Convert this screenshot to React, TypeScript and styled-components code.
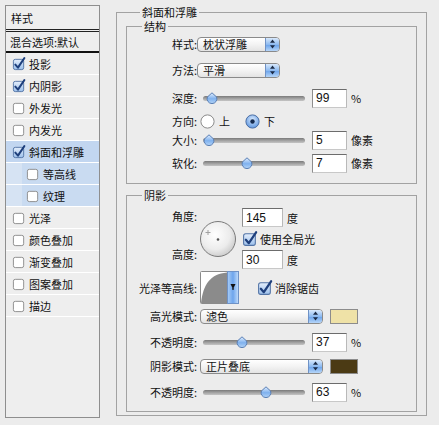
import React from "react";
import styled, { createGlobalStyle } from "styled-components";

const Global = createGlobalStyle`
  html, body { margin: 0; padding: 0; background: #ececec; }
  body {
    font-family: "Noto Sans CJK SC", "Noto Sans", sans-serif;
    font-size: 11px;
    color: #111;
  }
`;

const Page = styled.div`
  display: flex;
  align-items: flex-start;
  width: 439px;
  height: 425px;
  box-sizing: border-box;
  padding: 5px 0 0 5px;
  overflow: hidden;
`;

/* ---------- left list ---------- */

const LeftPanel = styled.div`
  width: 95px;
  height: 413px;
  box-sizing: border-box;
  border: 1px solid #8e8e8e;
  background: #eeeeee;
  display: flex;
  flex-direction: column;
`;

const Header = styled.div`
  height: 23px;
  display: flex;
  align-items: center;
  padding-left: 5px;
  border-bottom: 3px double #222;
`;

const BlendRow = styled.div`
  height: 19px;
  display: flex;
  align-items: center;
  padding-left: 4px;
  border-bottom: 2px solid #111;
`;

const StyleRow = styled.div<{ $active?: boolean; $sub?: boolean }>`
  height: 21px;
  display: flex;
  align-items: center;
  gap: 3px;
  padding-left: ${(p) => (p.$sub ? 20 : 6)}px;
  border-bottom: 1px solid #ffffff;
  background: ${(p) =>
    p.$sub
      ? "linear-gradient(90deg, #d6e3f3 0 16px, #c9dbf1 16px)"
      : p.$active
      ? "#c2d6f0"
      : "transparent"};
`;

/* ---------- right side ---------- */

const Group = styled.fieldset`
  margin: 0 0 0 16px;
  width: 311px;
  box-sizing: border-box;
  border: 1px solid #a2a2a2;
  padding: 0 9px 3px 9px;
`;

const SubGroup = styled.fieldset<{ $top?: number }>`
  margin: ${(p) => p.$top ?? 0}px 0 0 0;
  border: 1px solid #a2a2a2;
  padding: 0 0 ${(p) => (p.$top ? 1 : 6)}px 0;
  min-width: 0;
`;

const Legend = styled.legend<{ $ml: number }>`
  margin-left: ${(p) => p.$ml}px;
  padding: 0 2px;
  font-size: 11px;
  line-height: 14px;
`;

const Row = styled.div<{ $h: number }>`
  height: ${(p) => p.$h}px;
  display: flex;
  align-items: center;
`;

const Label = styled.div`
  width: 70px;
  flex-shrink: 0;
  text-align: right;
  white-space: nowrap;
`;

const Popup = styled.div<{ $w: number; $ml?: number }>`
  width: ${(p) => p.$w}px;
  height: 15px;
  margin-left: ${(p) => p.$ml ?? 0}px;
  box-sizing: border-box;
  border: 1px solid #8a8a8a;
  border-radius: 4px;
  background: linear-gradient(#ffffff, #f3f3f3 50%, #e3e3e3);
  display: flex;
  align-items: stretch;
  overflow: hidden;
`;

const PopupText = styled.div`
  flex: 1;
  padding-left: 5px;
  line-height: 13px;
`;

const Stepper = styled.div`
  width: 13px;
  border-left: 1px solid #6f92c6;
  background: linear-gradient(#d9e9fc, #8dbaf0 50%, #6ea5ec 55%, #b7d6f8);
  display: flex;
  align-items: center;
  justify-content: center;
`;

const SliderBox = styled.div`
  position: relative;
  width: 102px;
  height: 13px;
  margin-left: 6px;
  flex-shrink: 0;
`;

const Track = styled.div`
  position: absolute;
  left: 0;
  right: 0;
  top: 4px;
  height: 5px;
  border-radius: 3px;
  background: linear-gradient(#7a7a7a, #a9a9a9 60%, #c4c4c4);
`;

const Thumb = styled.div`
  position: absolute;
  top: 0;
  width: 12px;
  height: 13px;
`;

const NumBox = styled.div<{ $w?: number; $ml?: number }>`
  width: ${(p) => p.$w ?? 35}px;
  height: 19px;
  margin-left: ${(p) => p.$ml ?? 7}px;
  box-sizing: border-box;
  border: 1px solid;
  border-color: #6c6c6c #b9b9b9 #c8c8c8 #8e8e8e;
  background: #fff;
  padding-left: 3px;
  display: flex;
  align-items: center;
  font-family: "Liberation Sans", "Noto Sans", sans-serif;
  font-size: 12px;
  flex-shrink: 0;
`;

const Unit = styled.span`
  margin-left: 4px;
  white-space: nowrap;
`;

const RadioText = styled.span<{ $mr?: number }>`
  margin-left: 4px;
  margin-right: ${(p) => p.$mr ?? 0}px;
`;

const AngleBlock = styled.div`
  margin-top: 6px;
  height: 61px;
  display: flex;
`;

const AngleLabels = styled.div`
  width: 70px;
  flex-shrink: 0;
  display: flex;
  flex-direction: column;
  justify-content: space-between;
  align-items: flex-end;
  padding: 1px 0 8px;
  box-sizing: border-box;
  line-height: 14px;
`;

const DialWrap = styled.div`
  margin-left: 2px;
  display: flex;
  align-items: center;
`;

const AngleRight = styled.div`
  margin-left: 5px;
  display: flex;
  flex-direction: column;
  justify-content: space-between;
`;

const CheckLine = styled.div<{ $ml?: number }>`
  display: flex;
  align-items: center;
  gap: 2px;
  margin-left: ${(p) => p.$ml ?? 0}px;
  white-space: nowrap;
`;

const Swatch = styled.div<{ $c: string }>`
  width: 28px;
  height: 15px;
  margin-left: 7px;
  box-sizing: border-box;
  border: 1px solid #8c8c8c;
  background: ${(p) => p.$c};
`;

/* ---------- drawings ---------- */

const Check = ({ on, size = 13 }: { on?: boolean; size?: number }) => (
  <svg width={size + 2} height={size + 2} viewBox="0 0 15 15" style={{ flexShrink: 0 }}>
    <defs>
      <linearGradient id="cbOn" x1="0" y1="0" x2="0" y2="1">
        <stop offset="0" stopColor="#e4eefb" />
        <stop offset="1" stopColor="#9cc0ec" />
      </linearGradient>
    </defs>
    <rect
      x="1.5"
      y="2.5"
      width="11"
      height="11"
      rx="2"
      fill={on ? "url(#cbOn)" : "#fff"}
      stroke={on ? "#5374a6" : "#8a8a8a"}
    />
    {on && (
      <path
        d="M3.6 8.2 L6.4 11.4 L13.2 1.2"
        fill="none"
        stroke="#1e3f7c"
        strokeWidth="2.1"
        strokeLinecap="round"
        strokeLinejoin="round"
      />
    )}
  </svg>
);

const Arrows = () => (
  <svg width="7" height="10" viewBox="0 0 7 10">
    <path d="M3.5 0.5 L6 3.8 L1 3.8 Z" fill="#1b2a44" />
    <path d="M3.5 9.5 L6 6.2 L1 6.2 Z" fill="#1b2a44" />
  </svg>
);

const Select = ({ text, w, ml }: { text: string; w: number; ml?: number }) => (
  <Popup $w={w} $ml={ml}>
    <PopupText>{text}</PopupText>
    <Stepper>
      <Arrows />
    </Stepper>
  </Popup>
);

const Slider = ({ frac }: { frac: number }) => (
  <SliderBox>
    <Track />
    <Thumb style={{ left: Math.round(frac * 90) }}>
      <svg width="12" height="13" viewBox="0 0 12 13">
        <defs>
          <linearGradient id="th" x1="0" y1="0" x2="0" y2="1">
            <stop offset="0" stopColor="#e3efff" />
            <stop offset="0.55" stopColor="#7fb1ee" />
            <stop offset="1" stopColor="#b5d5f8" />
          </linearGradient>
        </defs>
        <path
          d="M6 0.8 L10.6 5 A4.9 4.9 0 1 1 1.4 5 Z"
          fill="url(#th)"
          stroke="#5a7fb4"
        />
      </svg>
    </Thumb>
  </SliderBox>
);

const Radio = ({ on }: { on?: boolean }) => (
  <svg width="15" height="15" viewBox="0 0 15 15" style={{ flexShrink: 0 }}>
    <defs>
      <radialGradient id="rOn" cx="50%" cy="35%" r="65%">
        <stop offset="0" stopColor="#d8e9fd" />
        <stop offset="1" stopColor="#5f97e0" />
      </radialGradient>
    </defs>
    <circle cx="7.5" cy="7.5" r="6.6" fill={on ? "url(#rOn)" : "#fff"} stroke={on ? "#4a6ea4" : "#8a8a8a"} />
    {on && <circle cx="7.5" cy="7.5" r="2.2" fill="#142a4e" />}
  </svg>
);

const Dial = () => (
  <svg width="38" height="38" viewBox="0 0 38 38">
    <defs>
      <radialGradient id="dial" cx="42%" cy="38%" r="70%">
        <stop offset="0" stopColor="#ffffff" />
        <stop offset="0.6" stopColor="#ececec" />
        <stop offset="1" stopColor="#c4c4c4" />
      </radialGradient>
    </defs>
    <circle cx="19" cy="19" r="17.5" fill="url(#dial)" stroke="#7a7a7a" />
    <path d="M6.5 12.5 H11.5 M9 10 V15" stroke="#a0a0a0" strokeWidth="1" />
    <circle cx="19" cy="19.5" r="1.3" fill="#555" />
  </svg>
);

const Contour = () => (
  <svg width="39" height="33" viewBox="0 0 39 33" style={{ flexShrink: 0 }}>
    <defs>
      <linearGradient id="ct" x1="0" y1="0" x2="1" y2="0">
        <stop offset="0" stopColor="#a8cdf7" />
        <stop offset="0.5" stopColor="#6ea5ec" />
        <stop offset="1" stopColor="#c4defb" />
      </linearGradient>
    </defs>
    <rect x="0.5" y="0.5" width="38" height="32" rx="1" fill="#fff" stroke="#8a8a8a" />
    <path d="M1 32 C 3 14, 10 3, 27 1.5 L27 32 Z" fill="#8b8b8b" />
    <rect x="27.5" y="0.5" width="11" height="32" fill="url(#ct)" stroke="#6f92c6" />
    <path d="M30.5 13 H35.5 L33 18 Z" fill="#111" />
    <rect x="32.4" y="17" width="1.2" height="2" fill="#111" />
  </svg>
);

/* ---------- page ---------- */

const styleItems: { name: string; on?: boolean; active?: boolean; sub?: boolean }[] = [
  { name: "投影", on: true },
  { name: "内阴影", on: true },
  { name: "外发光" },
  { name: "内发光" },
  { name: "斜面和浮雕", on: true, active: true },
  { name: "等高线", sub: true },
  { name: "纹理", sub: true },
  { name: "光泽" },
  { name: "颜色叠加" },
  { name: "渐变叠加" },
  { name: "图案叠加" },
  { name: "描边" },
];

export default function App() {
  return (
    <Page>
      <Global />
      <LeftPanel>
        <Header>样式</Header>
        <BlendRow>混合选项:默认</BlendRow>
        {styleItems.map((it) => (
          <StyleRow key={it.name} $active={it.active} $sub={it.sub}>
            <Check on={it.on} size={12} />
            <span>{it.name}</span>
          </StyleRow>
        ))}
      </LeftPanel>

      <Group>
        <Legend $ml={14}>斜面和浮雕</Legend>

        <SubGroup>
          <Legend $ml={15}>结构</Legend>
          <Row $h={22}>
            <Label>样式:</Label>
            <Select text="枕状浮雕" w={83} />
          </Row>
          <Row $h={30}>
            <Label>方法:</Label>
            <Select text="平滑" w={83} />
          </Row>
          <Row $h={26}>
            <Label>深度:</Label>
            <Slider frac={0.03} />
            <NumBox>99</NumBox>
            <Unit>%</Unit>
          </Row>
          <Row $h={20}>
            <Label>方向:</Label>
            <span style={{ width: 3 }} />
            <Radio />
            <RadioText $mr={15}>上</RadioText>
            <Radio on />
            <RadioText>下</RadioText>
          </Row>
          <Row $h={18}>
            <Label>大小:</Label>
            <Slider frac={0} />
            <NumBox>5</NumBox>
            <Unit>像素</Unit>
          </Row>
          <Row $h={28}>
            <Label>软化:</Label>
            <Slider frac={0.42} />
            <NumBox>7</NumBox>
            <Unit>像素</Unit>
          </Row>
        </SubGroup>

        <SubGroup $top={4}>
          <Legend $ml={15}>阴影</Legend>
          <AngleBlock>
            <AngleLabels>
              <span>角度:</span>
              <span>高度:</span>
            </AngleLabels>
            <DialWrap>
              <Dial />
            </DialWrap>
            <AngleRight>
              <Row $h={19}>
                <NumBox $w={41} $ml={0}>145</NumBox>
                <Unit>度</Unit>
              </Row>
              <CheckLine>
                <Check on size={14} />
                <span>使用全局光</span>
              </CheckLine>
              <Row $h={19}>
                <NumBox $w={41} $ml={0}>30</NumBox>
                <Unit>度</Unit>
              </Row>
            </AngleRight>
          </AngleBlock>
          <Row $h={37}>
            <Label>光泽等高线:</Label>
            <span style={{ width: 3 }} />
            <Contour />
            <CheckLine $ml={18}>
              <Check on size={14} />
              <span>消除锯齿</span>
            </CheckLine>
          </Row>
          <Row $h={20}>
            <Label>高光模式:</Label>
            <Select text="滤色" w={123} ml={3} />
            <Swatch $c="#efe2a7" />
          </Row>
          <Row $h={32}>
            <Label>不透明度:</Label>
            <Slider frac={0.37} />
            <NumBox>37</NumBox>
            <Unit>%</Unit>
          </Row>
          <Row $h={16}>
            <Label>阴影模式:</Label>
            <Select text="正片叠底" w={123} ml={3} />
            <Swatch $c="#4b3a14" />
          </Row>
          <Row $h={36}>
            <Label>不透明度:</Label>
            <Slider frac={0.63} />
            <NumBox>63</NumBox>
            <Unit>%</Unit>
          </Row>
        </SubGroup>
      </Group>
    </Page>
  );
}
